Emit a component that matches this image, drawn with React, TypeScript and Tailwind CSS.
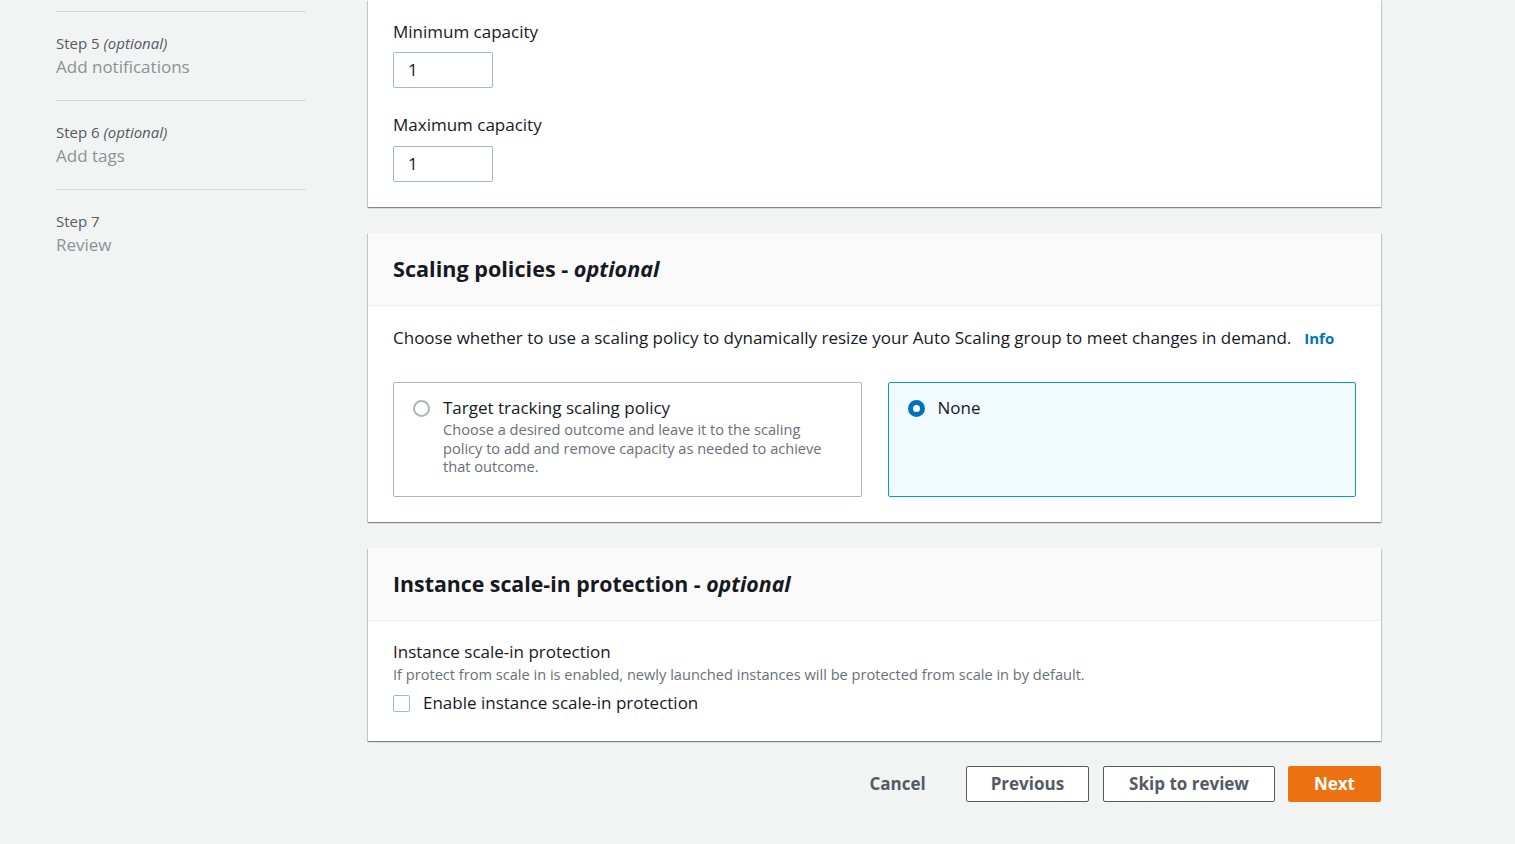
import React from "react";

const cardShadow =
  "shadow-[0_1px_1px_0_rgba(0,28,36,0.3),1px_1px_1px_0_rgba(0,28,36,0.15),-1px_1px_1px_0_rgba(0,28,36,0.15)]";

function Step({ n, optional, title }: { n: number; optional?: boolean; title: string }) {
  return (
    <div className="border-t border-[#d5dbdb] pt-[20px] pb-[20px]">
      <div className="text-[15px] leading-[22px] text-[#545b64]">
        Step {n} {optional && <i>(optional)</i>}
      </div>
      <div className="text-[17px] leading-[26px] text-[#879596]">{title}</div>
    </div>
  );
}

export default function App() {
  return (
    <div
      className="min-h-screen bg-[#f2f3f3] flex text-[#16191f]"
      style={{ fontFamily: "'Open Sans', 'Noto Sans', sans-serif" }}
    >
      <aside className="w-[250px] ml-[56px] mt-[11px] shrink-0">
        <Step n={5} optional title="Add notifications" />
        <Step n={6} optional title="Add tags" />
        <Step n={7} title="Review" />
      </aside>

      <main className="ml-[62px] w-[1013px] shrink-0 flex flex-col">
        {/* Group size card */}
        <section className={`bg-white ${cardShadow} px-[25px] pt-[20px] pb-[25px]`}>
          <label className="block text-[17px] leading-[24px]">Minimum capacity</label>
          <div className="mt-[8px] w-[100px] h-[36px] border border-[#aab7b8] rounded-[2px] flex items-center px-[14px] text-[17px]">
            1
          </div>
          <label className="block mt-[25px] text-[17px] leading-[24px]">Maximum capacity</label>
          <div className="mt-[9px] w-[100px] h-[36px] border border-[#aab7b8] rounded-[2px] flex items-center px-[14px] text-[17px]">
            1
          </div>
        </section>

        {/* Scaling policies */}
        <section className={`mt-[26px] bg-white ${cardShadow}`}>
          <header className="bg-[#fafafa] border-b border-[#eaeded] px-[25px] h-[73px] flex items-center">
            <h2 className="text-[21.6px] font-bold leading-[28px] -mt-[1px]">
              Scaling policies - <i>optional</i>
            </h2>
          </header>
          <div className="px-[25px] pt-[20px] pb-[25px]">
            <p className="text-[17px] leading-[24px] flex items-center">
              Choose whether to use a scaling policy to dynamically resize your Auto Scaling group to meet changes in demand.
              <span className="ml-[13px] text-[15px] font-bold text-[#0073bb]">Info</span>
            </p>
            <div className="mt-[32px] grid grid-cols-2 gap-[26px]">
              <div className="h-[115px] border border-[#aab7b8] rounded-[2px] pl-[19px] pr-[33px] pt-[13px] flex gap-[13px]">
                <span className="mt-[4px] w-[17px] h-[17px] rounded-full border-2 border-[#aab7b8] shrink-0" />
                <div>
                  <div className="text-[17px] leading-[24px]">Target tracking scaling policy</div>
                  <div className="text-[14.6px] leading-[18.5px] text-[#687078]">
                    Choose a desired outcome and leave it to the scaling policy to add and remove capacity as needed to achieve that outcome.
                  </div>
                </div>
              </div>
              <div className="h-[115px] border border-[#00a1c9] bg-[#f1faff] rounded-[2px] pl-[19px] pr-[20px] pt-[13px] flex gap-[13px]">
                <span className="mt-[4px] w-[17px] h-[17px] rounded-full border-[5px] border-[#0073bb] bg-white shrink-0" />
                <div className="text-[17px] leading-[24px]">None</div>
              </div>
            </div>
          </div>
        </section>

        {/* Instance scale-in protection */}
        <section className={`mt-[26px] bg-white ${cardShadow}`}>
          <header className="bg-[#fafafa] border-b border-[#eaeded] px-[25px] h-[73px] flex items-center">
            <h2 className="text-[21.3px] font-bold leading-[28px] -mt-[1px]">
              Instance scale-in protection - <i>optional</i>
            </h2>
          </header>
          <div className="px-[25px] pt-[19px] pb-[26px]">
            <div className="text-[17px] leading-[24px]">Instance scale-in protection</div>
            <div className="text-[14.6px] leading-[20px] text-[#687078]">
              If protect from scale in is enabled, newly launched instances will be protected from scale in by default.
            </div>
            <label className="mt-[7px] flex items-center gap-[13px] text-[17px] leading-[24px]">
              <span className="w-[17px] h-[17px] border border-[#aab7b8] rounded-[2px] bg-white" />
              Enable instance scale-in protection
            </label>
          </div>
        </section>

        {/* Actions */}
        <div className="mt-[25px] flex justify-end items-center">
          <button className="text-[17px] font-bold text-[#545b64] mr-[40px]">Cancel</button>
          <button className="h-[36px] px-[24px] border border-[#545b64] rounded-[2px] bg-white text-[17px] font-bold text-[#545b64]">
            Previous
          </button>
          <button className="ml-[14px] h-[36px] px-[25px] border border-[#545b64] rounded-[2px] bg-white text-[17px] font-bold text-[#545b64]">
            Skip to review
          </button>
          <button className="ml-[13px] h-[36px] px-[26px] rounded-[2px] bg-[#ec7211] text-[17px] font-bold text-white">
            Next
          </button>
        </div>
      </main>
    </div>
  );
}
